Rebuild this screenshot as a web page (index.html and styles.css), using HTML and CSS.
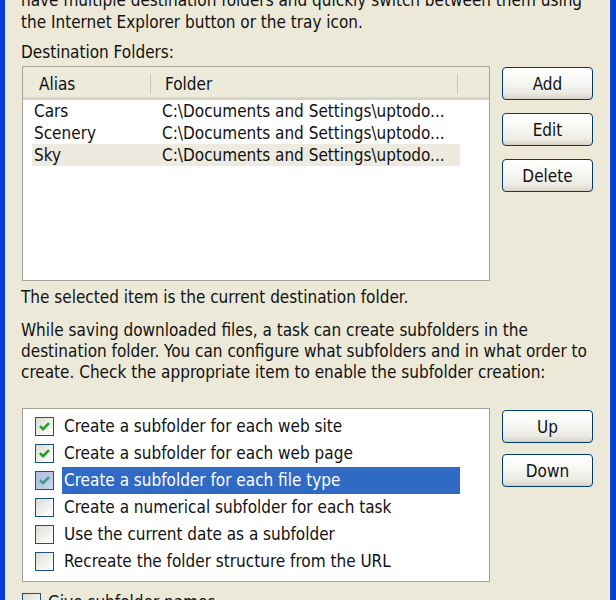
FILE: index.html
```html
<!DOCTYPE html>
<html lang="en">
<head>
<meta charset="utf-8">
<title>Subfolders</title>
<link rel="stylesheet" href="styles.css">
</head>
<body>
<div class="window">
  <div class="content">
    <p class="intro">have multiple destination folders and quickly switch between them using<br>the Internet Explorer button or the tray icon.</p>
    <p class="label">Destination Folders:</p>
    <div class="row row-dest">
      <div class="listview">
        <div class="lv-header">
          <div class="hcell hcol1">Alias</div>
          <div class="hcell hcol2">Folder</div>
        </div>
        <div class="lv-row">
          <div class="cell col1">Cars</div>
          <div class="cell col2">C:\Documents and Settings\uptodo...</div>
        </div>
        <div class="lv-row">
          <div class="cell col1">Scenery</div>
          <div class="cell col2">C:\Documents and Settings\uptodo...</div>
        </div>
        <div class="lv-row lv-selected">
          <div class="cell col1">Sky</div>
          <div class="cell col2">C:\Documents and Settings\uptodo...</div>
        </div>
      </div>
      <div class="buttons">
        <button class="btn" type="button">Add</button>
        <button class="btn" type="button">Edit</button>
        <button class="btn" type="button">Delete</button>
      </div>
    </div>
    <p class="note">The selected item is the current destination folder.</p>
    <p class="para">While saving downloaded files, a task can create subfolders in the<br>destination folder. You can configure what subfolders and in what order to<br>create. Check the appropriate item to enable the subfolder creation:</p>
    <div class="row row-sub">
      <div class="checklist">
        <div class="ck-row">
          <span class="box checked"><svg viewBox="0 0 19 19" width="19" height="19"><path d="M5 9.2 L8 12.2 L14 6.2" fill="none" stroke="#21a121" stroke-width="2.6"/></svg></span>
          <span class="ck-label">Create a subfolder for each web site</span>
        </div>
        <div class="ck-row">
          <span class="box checked"><svg viewBox="0 0 19 19" width="19" height="19"><path d="M5 9.2 L8 12.2 L14 6.2" fill="none" stroke="#21a121" stroke-width="2.6"/></svg></span>
          <span class="ck-label">Create a subfolder for each web page</span>
        </div>
        <div class="ck-row">
          <span class="box checked hot"><svg viewBox="0 0 19 19" width="19" height="19"><path d="M5 9.2 L8 12.2 L14 6.2" fill="none" stroke="#3f9a8a" stroke-width="2.6"/></svg></span>
          <span class="ck-label ck-selected">Create a subfolder for each file type</span>
        </div>
        <div class="ck-row">
          <span class="box"></span>
          <span class="ck-label">Create a numerical subfolder for each task</span>
        </div>
        <div class="ck-row">
          <span class="box"></span>
          <span class="ck-label">Use the current date as a subfolder</span>
        </div>
        <div class="ck-row">
          <span class="box"></span>
          <span class="ck-label">Recreate the folder structure from the URL</span>
        </div>
      </div>
      <div class="buttons buttons-sub">
        <button class="btn" type="button">Up</button>
        <button class="btn" type="button">Down</button>
      </div>
    </div>
    <div class="bottom-check">
      <span class="box"></span>
      <span class="bottom-label">Give subfolder names</span>
    </div>
  </div>
</div>
</body>
</html>
```
FILE: styles.css
```css
html, body {
  margin: 0;
  padding: 0;
  background: #ece9d8;
}

.window {
  height: 600px;
  overflow: hidden;
  box-sizing: border-box;
  background: #ece9d8;
  border-left: 5px solid #0a3fd6;
  border-right: 6px solid #0a3fd6;
  box-shadow: inset -1px 0 0 #f6f5ee;
  font-family: "DejaVu Sans Condensed", "DejaVu Sans", sans-serif;
  font-size: 17px;
  color: #111;
}

.content {
  padding-left: 16px;
}

p {
  margin: 0;
}

.intro {
  margin-top: -11px;
  line-height: 22px;
}

.label {
  margin-top: 8px;
  line-height: 22px;
}

.row {
  display: flex;
  gap: 12px;
}

.row-dest {
  margin-top: 3px;
  margin-left: 1px;
}

.listview {
  width: 468px;
  height: 215px;
  box-sizing: border-box;
  border: 1px solid #a3a39c;
  background: #fff;
}

.lv-header {
  display: flex;
  height: 33px;
  box-sizing: border-box;
  padding-top: 3px;
  background: #ebeadb;
  border-bottom: 3px solid #d9d5c5;
  align-items: center;
}

.hcell {
  height: 100%;
  display: flex;
  align-items: center;
  box-sizing: border-box;
}

.hcol1 {
  width: 128px;
  padding-left: 16px;
  background: linear-gradient(#c9c6b4, #c9c6b4) right center / 1px 20px no-repeat;
}

.hcol2 {
  width: 307px;
  padding-left: 14px;
  background: linear-gradient(#c9c6b4, #c9c6b4) right center / 1px 20px no-repeat;
}

.lv-row {
  display: flex;
  height: 22px;
  align-items: center;
  margin-left: 9px;
  width: 428px;
}

.lv-selected {
  background: #edebe0;
}

.cell {
  line-height: 22px;
  white-space: nowrap;
  box-sizing: border-box;
}

.col1 {
  width: 119px;
  padding-left: 2px;
}

.col2 {
  padding-left: 11px;
}

.buttons {
  display: flex;
  flex-direction: column;
  gap: 13px;
  padding-top: 1px;
}

.buttons-sub {
  gap: 11px;
  padding-top: 2px;
}

.btn {
  width: 91px;
  height: 33px;
  box-sizing: border-box;
  border: 1px solid #003c74;
  border-radius: 4px;
  background: linear-gradient(#ffffff 0%, #f7f7f3 45%, #ecebe4 80%, #d8d4c8 100%);
  font-family: inherit;
  font-size: 17px;
  color: #111;
  padding: 0;
  box-shadow: inset 0 -1px 0 #d6d0c5;
}

.note {
  margin-top: 5px;
  line-height: 22px;
}

.para {
  margin-top: 12px;
  line-height: 21px;
}

.row-sub {
  margin-top: 25px;
  margin-left: 1px;
}

.checklist {
  width: 468px;
  height: 174px;
  box-sizing: border-box;
  border: 1px solid #a3a39c;
  background: #fff;
  padding-top: 4px;
}

.ck-row {
  display: flex;
  align-items: center;
  height: 27px;
}

.box {
  width: 19px;
  height: 19px;
  box-sizing: border-box;
  border: 1px solid #1c5180;
  background: linear-gradient(135deg, #dcdcd7 0%, #f2f2ee 60%, #ffffff 100%);
  display: flex;
  align-items: center;
  justify-content: center;
  flex: none;
}

.box svg {
  display: block;
  margin: -1px;
}

.checklist .box {
  margin-left: 12px;
  margin-right: 8px;
}

.box.hot {
  background: linear-gradient(135deg, #a9bedf 0%, #bccbe5 60%, #cfd9ec 100%);
}

.ck-label {
  width: 398px;
  height: 27px;
  line-height: 27px;
  padding-left: 2px;
  box-sizing: border-box;
  white-space: nowrap;
}

.ck-selected {
  background: #316ac5;
  color: #fff;
}

.bottom-check {
  margin-top: 9px;
  margin-left: 1px;
  display: flex;
  align-items: center;
  gap: 7px;
  height: 22px;
}

.bottom-label {
  line-height: 22px;
}
```
